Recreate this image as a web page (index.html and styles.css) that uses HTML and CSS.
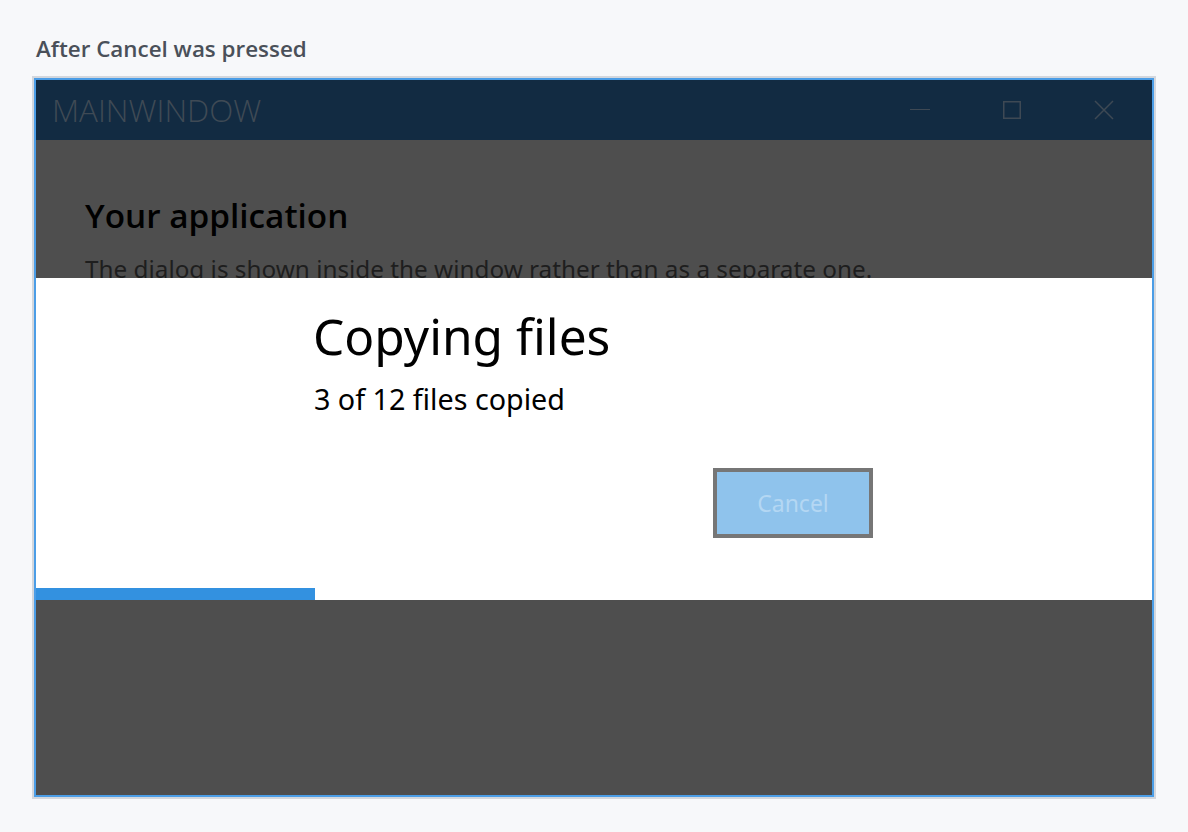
FILE: index.html
```html
<!DOCTYPE html>
<html lang="en">
<head>
<meta charset="utf-8">
<title>After Cancel was pressed</title>
<link rel="stylesheet" href="styles.css">
</head>
<body>
<main class="page">
  <h2 class="caption">After Cancel was pressed</h2>
  <div class="window">
    <header class="titlebar">
      <span class="title">MAINWINDOW</span>
      <div class="controls">
        <span class="ctl">
          <svg width="20" height="20" viewBox="0 0 20 20"><path d="M0 9.5H20" stroke="currentColor" stroke-width="1"/></svg>
        </span>
        <span class="ctl">
          <svg width="20" height="20" viewBox="0 0 20 20"><rect x="1.75" y="1.75" width="16.5" height="16.5" fill="none" stroke="currentColor" stroke-width="1.5"/></svg>
        </span>
        <span class="ctl">
          <svg width="20" height="20" viewBox="0 0 20 20"><path d="M1 1L19 19M19 1L1 19" stroke="currentColor" stroke-width="1.5"/></svg>
        </span>
      </div>
    </header>
    <section class="content">
      <h1 class="app-title">Your application</h1>
      <p class="app-text">The dialog is shown inside the window rather than as a separate one.</p>

      <div class="dialog" role="dialog" aria-labelledby="dlg-title">
        <div class="dialog-body">
          <h3 class="dialog-title" id="dlg-title">Copying files</h3>
          <p class="dialog-text">3 of 12 files copied</p>
          <div class="dialog-actions">
            <button class="btn-cancel" disabled>Cancel</button>
          </div>
        </div>
        <div class="progress" style="width: 25%"></div>
      </div>
    </section>
  </div>
</main>
</body>
</html>
```

FILE: styles.css
```css
* { box-sizing: border-box; }

html, body {
  margin: 0;
  padding: 0;
}

body {
  background: #f7f8fa;
  font-family: "Noto Sans", "Open Sans", "Liberation Sans", sans-serif;
  width: 1188px;
  height: 832px;
  overflow: hidden;
}

.page {
  padding: 35px 34px 0 34px;
}

.caption {
  margin: 0 0 15px 2px;
  font-family: "Open Sans", "Noto Sans", sans-serif;
  font-weight: 600;
  font-size: 22.4px;
  line-height: 28px;
  color: #4a5059;
}

/* window frame: 2px accent border plus a 2px pale outline */
.window {
  width: 1120px;
  height: 719px;
  border: 2px solid #4b9de6;
  box-shadow: 0 0 0 2px #d3d7dd;
  display: flex;
  flex-direction: column;
}

.titlebar {
  height: 60px;
  flex: none;
  background: #122b42;
  display: flex;
  align-items: center;
  justify-content: space-between;
  padding-left: 16px;
}

.title {
  font-family: "Open Sans", "Noto Sans", sans-serif;
  font-weight: 300;
  font-size: 31.4px;
  line-height: 40px;
  margin-top: -1px;
  color: #3f4a55;
}

.controls {
  display: flex;
  height: 100%;
  padding-right: 2px;
}

.ctl {
  width: 92px;
  height: 100%;
  display: flex;
  align-items: center;
  justify-content: center;
  color: #3e4954;
}

.ctl svg { display: block; }

.content {
  position: relative;
  flex: 1;
  background: #4e4e4e;
  padding: 51px 49px 0 49px;
  overflow: hidden;
}

.app-title {
  margin: 0;
  font-family: "Open Sans", "Noto Sans", sans-serif;
  font-weight: 600;
  font-size: 33.3px;
  line-height: 48px;
  color: #000;
}

.app-text {
  margin: 14px 0 0 0;
  font-size: 24.3px;
  line-height: 32px;
  color: #1e1e1e;
}

/* in-window dialog laid over the dimmed content */
.dialog {
  position: absolute;
  left: 0;
  right: 0;
  top: 138px;
  height: 322px;
  background: #ffffff;
}

.dialog-body {
  width: 558px;
  margin: 0 auto;
  padding-top: 25px;
  display: flex;
  flex-direction: column;
}

.dialog-title {
  margin: 0 0 0 -2px;
  font-weight: 400;
  font-size: 49.6px;
  line-height: 66px;
  color: #000;
}

.dialog-text {
  margin: 12px 0 0 -1px;
  font-size: 28.7px;
  line-height: 36px;
  color: #000;
}

.dialog-actions {
  display: flex;
  justify-content: flex-end;
  margin-top: 51px;
}

.btn-cancel {
  width: 160px;
  height: 70px;
  background: #8fc3ec;
  border: 4px solid #767676;
  color: #b4d7f3;
  font-family: "Noto Sans", "Open Sans", sans-serif;
  font-size: 23px;
  padding: 0;
}

.progress {
  position: absolute;
  left: 0;
  bottom: 0;
  height: 12px;
  background: #3391e0;
}
```
